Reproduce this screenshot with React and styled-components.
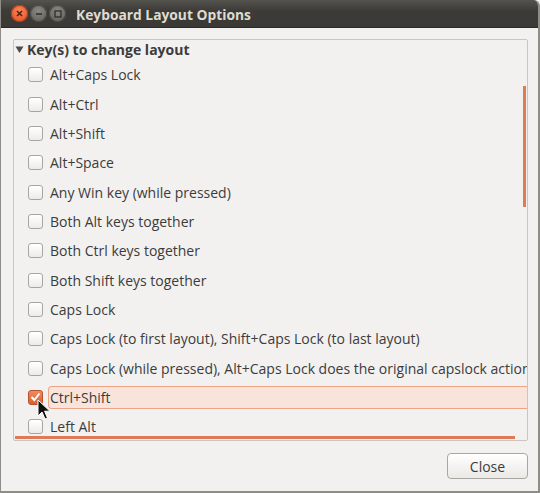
import React from "react";
import styled, { createGlobalStyle } from "styled-components";

const GlobalStyle = createGlobalStyle`
  html, body { margin: 0; padding: 0; background: #f2f1f0; }
  body { font-family: "Open Sans", "DejaVu Sans", sans-serif; }
  * { box-sizing: border-box; }
`;

const options = [
  "Alt+Caps Lock",
  "Alt+Ctrl",
  "Alt+Shift",
  "Alt+Space",
  "Any Win key (while pressed)",
  "Both Alt keys together",
  "Both Ctrl keys together",
  "Both Shift keys together",
  "Caps Lock",
  "Caps Lock (to first layout), Shift+Caps Lock (to last layout)",
  "Caps Lock (while pressed), Alt+Caps Lock does the original capslock action",
  "Ctrl+Shift",
  "Left Alt",
];

const Window = styled.div`
  width: 540px;
  height: 493px;
  display: flex;
  flex-direction: column;
  background: #f2f1f0;
  border-left: 1px solid #8f8d88;
  border-right: 2px solid #8f8d88;
  border-bottom: 2px solid #8f8d88;
  border-top-right-radius: 6px;
  overflow: hidden;
  position: relative;
`;

const TitleBar = styled.div`
  height: 28px;
  flex: none;
  display: flex;
  align-items: center;
  padding-left: 10px;
  background: linear-gradient(#55534e, #3c3b37 40%, #3a3935);
  border-bottom: 1px solid #2a2926;
`;

const WinButtons = styled.div`
  display: flex;
  gap: 2px;
  margin-right: 10px;
`;

const WinButton = styled.div`
  width: 17px;
  height: 17px;
  border-radius: 50%;
  display: flex;
  align-items: center;
  justify-content: center;
  background: ${(p) =>
    p.$close
      ? "radial-gradient(circle at 50% 35%, #f6875a, #df4b1f)"
      : "radial-gradient(circle at 50% 35%, #8a8883, #5d5b56)"};
  box-shadow: inset 0 0 0 1px ${(p) => (p.$close ? "#b53a16" : "#4a4844")};
`;

const Title = styled.div`
  color: #dfdbd2;
  font-weight: 700;
  font-size: 13.8px;
  margin-top: 1px;
`;

const Body = styled.div`
  flex: 1;
  display: flex;
  flex-direction: column;
  padding: 11px 10px 0 12px;
`;

const Frame = styled.div`
  position: relative;
  height: 402px;
  border: 1px solid #c9c6c1;
  border-radius: 2px;
  overflow: hidden;
  background: #f2f1f0;
`;

const Header = styled.div`
  display: flex;
  align-items: center;
  height: 18px;
  padding-left: 1px;
  font-weight: 700;
  font-size: 14px;
  color: #3c3c3c;
  gap: 3px;
`;

const List = styled.div`
  display: flex;
  flex-direction: column;
  padding-top: 2px;
`;

const Row = styled.div`
  height: 29.35px;
  display: flex;
  align-items: center;
  padding-left: 14px;
  gap: 5px;
  white-space: nowrap;
`;

const Box = styled.div`
  width: 15px;
  height: 15px;
  flex: none;
  border-radius: 3px;
  display: flex;
  align-items: center;
  justify-content: center;
  border: 1px solid ${(p) => (p.$checked ? "#b9532d" : "#a9a6a1")};
  background: ${(p) =>
    p.$checked
      ? "linear-gradient(#f08a60, #d9622f)"
      : "linear-gradient(#ffffff, #ecebea)"};
`;

const Label = styled.div`
  font-size: 14px;
  color: #3c3c3c;
  height: 23px;
  display: flex;
  align-items: center;
  flex: 1;
  padding-left: 1px;
  border: 1px solid ${(p) => (p.$selected ? "#eda387" : "transparent")};
  border-right: none;
  border-radius: 4px 0 0 4px;
  background: ${(p) => (p.$selected ? "#f9e4dc" : "transparent")};
`;

const VScroll = styled.div`
  position: absolute;
  right: 1px;
  top: 46px;
  width: 3px;
  height: 121px;
  background: #dd7b55;
`;

const HScroll = styled.div`
  position: absolute;
  left: 1px;
  bottom: 1px;
  width: 500px;
  height: 3px;
  background: #dd7b55;
`;

const Cursor = styled.svg`
  position: absolute;
  left: 36px;
  top: 399px;
`;

const Footer = styled.div`
  display: flex;
  justify-content: flex-end;
  padding: 12px 0 0 0;
`;

const Button = styled.button`
  width: 81px;
  height: 26px;
  border: 1px solid #a9a7a2;
  border-radius: 4px;
  background: linear-gradient(#ffffff, #ebe9e6);
  font-family: inherit;
  font-size: 14px;
  color: #3c3c3c;
  padding: 0;
`;

export default function App() {
  return (
    <>
      <GlobalStyle />
      <Window>
        <TitleBar>
          <WinButtons>
            <WinButton $close>
              <svg width="7" height="7" viewBox="0 0 7 7">
                <path d="M1 1L6 6M6 1L1 6" stroke="#5a1a06" strokeWidth="1.6" />
              </svg>
            </WinButton>
            <WinButton>
              <svg width="8" height="8" viewBox="0 0 8 8">
                <path d="M1 4H7" stroke="#35332f" strokeWidth="1.6" />
              </svg>
            </WinButton>
            <WinButton>
              <svg width="8" height="8" viewBox="0 0 8 8">
                <rect x="1" y="1" width="6" height="6" fill="none" stroke="#35332f" strokeWidth="1.4" />
              </svg>
            </WinButton>
          </WinButtons>
          <Title>Keyboard Layout Options</Title>
        </TitleBar>
        <Body>
          <Frame>
            <Header>
              <svg width="9" height="9" viewBox="0 0 9 9">
                <path d="M0.5 1.5H8.5L4.5 8Z" fill="#4c4c4c" />
              </svg>
              Key(s) to change layout
            </Header>
            <List>
              {options.map((o) => {
                const sel = o === "Ctrl+Shift";
                return (
                  <Row key={o}>
                    <Box $checked={sel}>
                      {sel && (
                        <svg width="11" height="10" viewBox="0 0 11 10">
                          <path d="M1.5 5L4.3 8L9.5 1.5" fill="none" stroke="#fff" strokeWidth="2" />
                        </svg>
                      )}
                    </Box>
                    <Label $selected={sel}>{o}</Label>
                  </Row>
                );
              })}
            </List>
            <VScroll />
            <HScroll />
          </Frame>
          <Footer>
            <Button>Close</Button>
          </Footer>
        </Body>
        <Cursor width="14" height="22" viewBox="0 0 14 22">
          <path d="M1 1V17L5 13L8 20L10.5 19L7.6 12.2H13Z" fill="#111" stroke="#fff" strokeWidth="1" />
        </Cursor>
      </Window>
    </>
  );
}
